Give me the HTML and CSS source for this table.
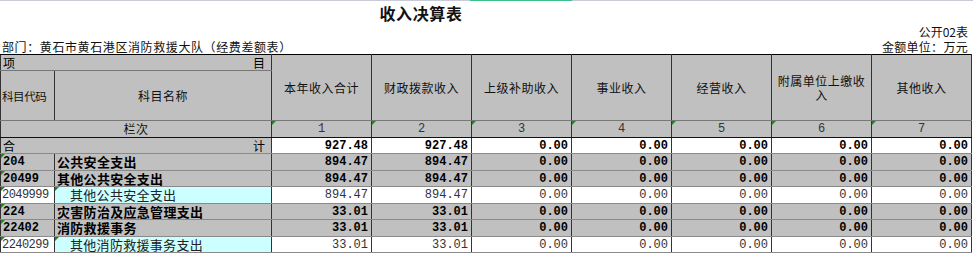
FILE: index.html
```html
<!DOCTYPE html>
<html lang="zh">
<head>
<meta charset="utf-8">
<link rel="stylesheet" href="styles.css">
</head>
<body>
<div class="topbar"><span class="sel"></span></div>
<div class="title">收入决算表</div>
<div class="meta-right">公开02表</div>
<div class="meta-row">
  <span class="dept">部门：黄石市黄石港区消防救援大队（经费差额表）</span>
  <span class="unit">金额单位：万元</span>
</div>
<table class="sheet">
  <colgroup>
    <col class="c-code"><col class="c-name">
    <col class="c-num"><col class="c-num"><col class="c-num"><col class="c-num"><col class="c-num"><col class="c-num"><col class="c-num">
  </colgroup>
  <tr class="h1">
    <td colspan="2" class="hd split"><span>项</span><span>目</span></td>
    <td rowspan="2" class="hd ch">本年收入合计</td>
    <td rowspan="2" class="hd ch">财政拨款收入</td>
    <td rowspan="2" class="hd ch">上级补助收入</td>
    <td rowspan="2" class="hd ch">事业收入</td>
    <td rowspan="2" class="hd ch">经营收入</td>
    <td rowspan="2" class="hd ch">附属单位上缴收入</td>
    <td rowspan="2" class="hd ch">其他收入</td>
  </tr>
  <tr class="h2">
    <td class="hd ch small">科目代码</td>
    <td class="hd ch">科目名称</td>
  </tr>
  <tr class="h3">
    <td colspan="2" class="hd ch">栏次</td>
    <td class="hd idx tri">1</td>
    <td class="hd idx tri">2</td>
    <td class="hd idx tri">3</td>
    <td class="hd idx tri">4</td>
    <td class="hd idx tri">5</td>
    <td class="hd idx tri">6</td>
    <td class="hd idx tri">7</td>
  </tr>
  <tr class="r tot">
    <td colspan="2" class="hd split"><span>合</span><span>计</span></td>
    <td class="n b">927.48</td><td class="n b">927.48</td><td class="n b">0.00</td><td class="n b">0.00</td><td class="n b">0.00</td><td class="n b">0.00</td><td class="n b">0.00</td>
  </tr>
  <tr class="r g">
    <td class="code tri">204</td><td class="name">公共安全支出</td>
    <td class="n b">894.47</td><td class="n b">894.47</td><td class="n b">0.00</td><td class="n b">0.00</td><td class="n b">0.00</td><td class="n b">0.00</td><td class="n b">0.00</td>
  </tr>
  <tr class="r g">
    <td class="code tri">20499</td><td class="name">其他公共安全支出</td>
    <td class="n b">894.47</td><td class="n b">894.47</td><td class="n b">0.00</td><td class="n b">0.00</td><td class="n b">0.00</td><td class="n b">0.00</td><td class="n b">0.00</td>
  </tr>
  <tr class="r w">
    <td class="code tri">2049999</td><td class="name leaf tri">其他公共安全支出</td>
    <td class="n">894.47</td><td class="n">894.47</td><td class="n">0.00</td><td class="n">0.00</td><td class="n">0.00</td><td class="n">0.00</td><td class="n">0.00</td>
  </tr>
  <tr class="r g">
    <td class="code tri">224</td><td class="name">灾害防治及应急管理支出</td>
    <td class="n b">33.01</td><td class="n b">33.01</td><td class="n b">0.00</td><td class="n b">0.00</td><td class="n b">0.00</td><td class="n b">0.00</td><td class="n b">0.00</td>
  </tr>
  <tr class="r g">
    <td class="code tri">22402</td><td class="name">消防救援事务</td>
    <td class="n b">33.01</td><td class="n b">33.01</td><td class="n b">0.00</td><td class="n b">0.00</td><td class="n b">0.00</td><td class="n b">0.00</td><td class="n b">0.00</td>
  </tr>
  <tr class="r w">
    <td class="code tri">2240299</td><td class="name leaf tri">其他消防救援事务支出</td>
    <td class="n">33.01</td><td class="n">33.01</td><td class="n">0.00</td><td class="n">0.00</td><td class="n">0.00</td><td class="n">0.00</td><td class="n">0.00</td>
  </tr>
</table>
</body>
</html>
```
FILE: styles.css
```css
html, body {
  margin: 0;
  padding: 0;
  background: #fff;
}
body {
  width: 973px;
  height: 257px;
  overflow: hidden;
  font-family: "Noto Sans CJK SC", "Liberation Sans", sans-serif;
  color: #000;
}
.topbar {
  height: 1px;
  background: #c9cad8;
  display: flex;
}
.sel {
  margin-left: 470px;
  width: 102px;
  height: 1px;
  background: #3cc08a;
}
.title {
  width: 842px;
  height: 24px;
  text-align: center;
  font-size: 16px;
  font-weight: bold;
  letter-spacing: 0.6px;
  line-height: 24px;
  color: #111;
}
.meta-right {
  height: 14px;
  text-align: right;
  padding-right: 5px;
  font-size: 12px;
  line-height: 14px;
  color: #111;
}
.meta-row {
  height: 15px;
  display: flex;
  justify-content: space-between;
  padding: 0 5px 0 2px;
  font-size: 12px;
  line-height: 15px;
  letter-spacing: 0.6px;
  color: #111;
}
.unit { letter-spacing: 0.3px; }
.sheet {
  border-collapse: collapse;
  table-layout: fixed;
  width: 971px;
  font-size: 12px;
}
.c-code { width: 54px; }
.c-name { width: 217px; }
.c-num { width: 100px; }
.sheet td {
  padding: 0;
  border: 1px solid #333;
  overflow: hidden;
  white-space: nowrap;
  position: relative;
  line-height: 14px;
  vertical-align: middle;
}
.sheet tr:first-child td { border-top-color: #000; }
.hd {
  background: #c0c0c0;
}
.ch {
  text-align: center;
  letter-spacing: 0.5px;
  color: #111;
  white-space: normal !important;
  padding: 0 3px !important;
}
.small {
  font-size: 11.5px;
  letter-spacing: -0.4px;
  text-align: left;
  padding: 0 0 0 1px !important;
}
.h1 td { height: 15px; }
.h2 td { height: 49px; }
.h2 td, .h1 td { border-bottom-color: #777; }
.h3 td { height: 16px; border-bottom-color: #111; }
.split {
  padding: 0 6px 0 2px !important;
}
.split span:first-child { float: left; }
.split span:last-child { float: right; }
.idx {
  text-align: center;
  font-family: "Liberation Mono", monospace;
  color: #333;
}
.r td {
  height: 15px;
  border-bottom-color: #8a8a8a;
  border-top-color: #8a8a8a;
}
.r:nth-child(odd) td { height: 16px; }
.n {
  text-align: right;
  font-family: "Liberation Mono", monospace;
  font-size: 12px;
  padding-right: 3px !important;
  color: #333;
  background: #fff;
}
.n.b {
  font-weight: bold;
  color: #000;
}
.g td { background: #c0c0c0; }
.code {
  font-family: "Liberation Mono", monospace;
  padding-left: 2px !important;
}
.g .code { font-weight: bold; }
.w .code { color: #333; background: #fff; font-size: 12px; letter-spacing: -0.55px; padding-left: 1px !important; }
.name {
  padding-left: 2px !important;
  font-size: 13px;
  letter-spacing: 0.3px;
}
.g .name { font-weight: bold; }
.leaf {
  background: #ccffff;
  padding-left: 15px !important;
  color: #222;
}
.tri::before {
  content: "";
  position: absolute;
  left: 0;
  top: 0;
  border-top: 4px solid #1a8a1a;
  border-right: 4px solid transparent;
}
```
